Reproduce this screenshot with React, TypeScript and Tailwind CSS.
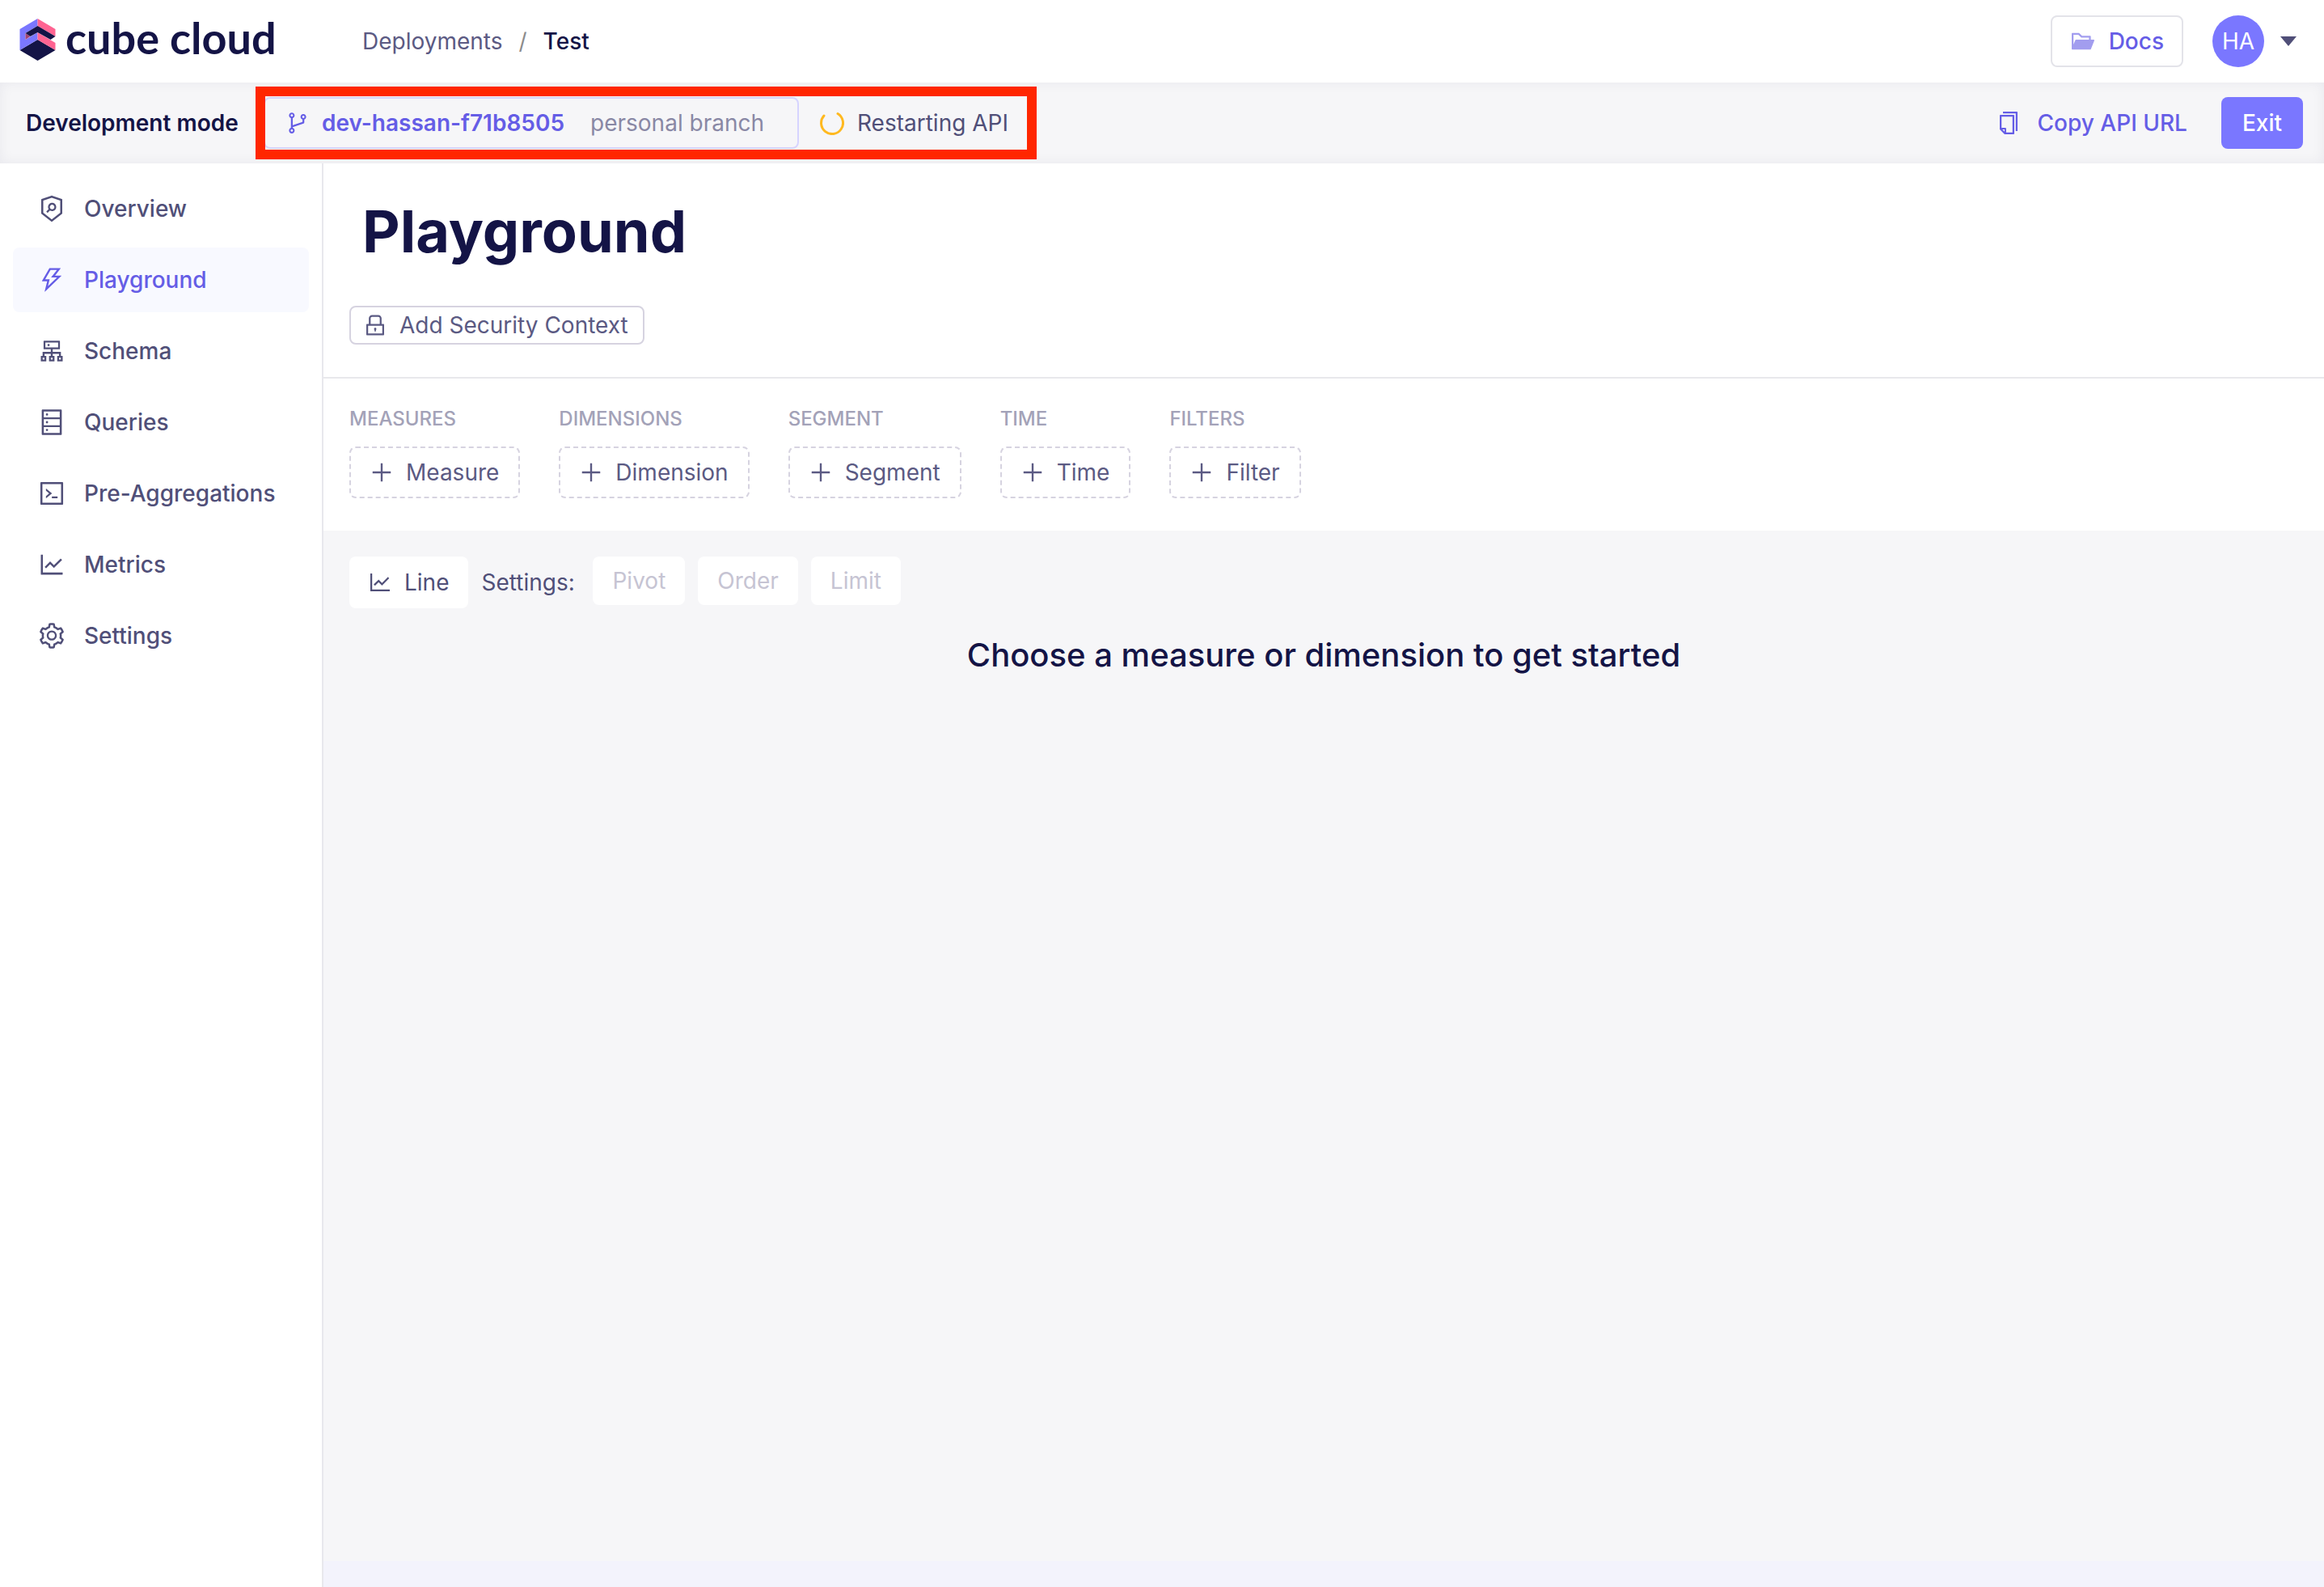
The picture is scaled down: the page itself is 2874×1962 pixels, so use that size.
import type { ComponentType, ReactNode } from "react";
import {
  AiFillFolderOpen,
  AiOutlineBranches,
  AiOutlineCluster,
  AiOutlineCode,
  AiOutlineCopy,
  AiOutlineDatabase,
  AiOutlineLineChart,
  AiOutlineLock,
  AiOutlinePlus,
  AiOutlineSecurityScan,
  AiOutlineSetting,
  AiOutlineThunderbolt,
} from "react-icons/ai";

type Icon = ComponentType<{ className?: string }>;

const navItems: { label: string; icon: Icon; active?: boolean }[] = [
  { label: "Overview", icon: AiOutlineSecurityScan },
  { label: "Playground", icon: AiOutlineThunderbolt, active: true },
  { label: "Schema", icon: AiOutlineCluster },
  { label: "Queries", icon: AiOutlineDatabase },
  { label: "Pre-Aggregations", icon: AiOutlineCode },
  { label: "Metrics", icon: AiOutlineLineChart },
  { label: "Settings", icon: AiOutlineSetting },
];

const members = [
  { heading: "Measures", action: "Measure" },
  { heading: "Dimensions", action: "Dimension" },
  { heading: "Segment", action: "Segment" },
  { heading: "Time", action: "Time" },
  { heading: "Filters", action: "Filter" },
];

function CubeMark() {
  return (
    <svg viewBox="0 0 44 52" className="h-[52px] w-[45px]" aria-hidden="true">
      <path d="M22 26 44 39 22 52 0 39Z" fill="#141446" />
      <path d="M0 13 22 0V9L7 18V26L22 17V26L0 39Z" fill="#7a77ff" />
      <path d="M7 18 13 22 7 26Z" fill="#a14474" />
      <path d="M22 0 44 13V22L22 9Z" fill="#ff6492" />
      <path d="M22 17 44 30V39L22 26Z" fill="#ff6492" />
      <path d="M22 9 44 22 38 26 22 17 13 22 7 18Z" fill="#141446" />
    </svg>
  );
}

function Header() {
  return (
    <header className="flex h-[102px] items-center justify-between px-6">
      <div className="flex items-center">
        <a href="#home" className="flex w-[424px] items-center gap-3 pb-1 text-[#141446]">
          <CubeMark />
          <span className="pb-1 font-[Lato] text-[54px] leading-none font-bold">cube cloud</span>
        </a>
        <nav aria-label="Breadcrumb" className="flex items-center gap-5">
          <a href="#deployments" className="text-[#5b5a83]">Deployments</a>
          <span className="text-[#8c8c8c]">/</span>
          <span className="font-medium text-[#141446]">Test</span>
        </nav>
      </div>
      <div className="flex items-center gap-9">
        <a
          href="#docs"
          className="flex h-16 items-center gap-4 rounded-lg border-2 border-[#e3e3e9] px-[22px] font-medium text-[#655de6]"
        >
          <AiFillFolderOpen className="size-8 opacity-60" />
          Docs
        </a>
        <button type="button" aria-label="Account" className="flex items-center gap-5 pr-2.5">
          <span className="flex size-16 items-center justify-center rounded-full bg-[#7a77ff] text-white">HA</span>
          <svg viewBox="0 0 20 12" className="h-3 w-5" aria-hidden="true">
            <path d="M0 0H20L10 12Z" fill="#504f78" />
          </svg>
        </button>
      </div>
    </header>
  );
}

function DevelopmentBar() {
  return (
    <div className="flex h-[100px] items-center justify-between bg-[#f6f6f8] pr-[26px] pl-8 shadow-[inset_0_0_16px_rgba(20,20,70,0.06)]">
      <div className="flex items-center">
        <span className="w-[294px] font-semibold text-[#141446]">Development mode</span>
        <div className="relative flex items-center">
          <button
            type="button"
            className="flex h-16 w-[662px] items-center gap-3.5 rounded-lg border-2 border-[#d6d4ff] pl-6"
          >
            <AiOutlineBranches className="size-8 text-[#655de6]" />
            <span className="flex items-center gap-8">
              <span className="font-semibold text-[#655de6]">dev-hassan-f71b8505</span>
              <span className="text-[#8988a5]">personal branch</span>
            </span>
          </button>
          <div className="flex w-[284px] items-center gap-4 pl-[26px] text-[#504f78]">
            <svg viewBox="0 0 30 30" className="size-[30px] shrink-0" aria-hidden="true">
              <path d="M22 3.500A13.500 13.500 0 1 1 5 6" fill="none" stroke="#ffb920" strokeWidth="3" strokeLinecap="round" />
            </svg>
            <span className="whitespace-nowrap">Restarting API</span>
          </div>
          <div className="pointer-events-none absolute -inset-x-[10px] -inset-y-[13px] border-12 border-[#ff2600]" />
        </div>
      </div>
      <div className="flex items-center gap-[42px]">
        <button type="button" className="flex items-center gap-5 font-medium text-[#655de6]">
          <AiOutlineCopy className="size-8" />
          Copy API URL
        </button>
        <button type="button" className="h-16 rounded-lg bg-[#7a77ff] px-[26px] font-medium text-white">
          Exit
        </button>
      </div>
    </div>
  );
}

function Sidebar() {
  return (
    <nav aria-label="Main" className="flex w-[400px] shrink-0 flex-col gap-2 border-r-2 border-[#e8e8ed] p-4">
      {navItems.map(({ label, icon: ItemIcon, active }) => (
        <a
          key={label}
          href={`#${label.toLowerCase()}`}
          aria-current={active ? "page" : undefined}
          className={
            active
              ? "flex h-20 items-center gap-[22px] rounded-lg bg-[#f8f9ff] pl-[30px] font-medium text-[#655de6]"
              : "flex h-20 items-center gap-[22px] rounded-lg pl-[30px] font-medium text-[#504f78]"
          }
        >
          <ItemIcon className="size-9" />
          {label}
        </a>
      ))}
    </nav>
  );
}

function SettingButton({ children }: { children: ReactNode }) {
  return (
    <button type="button" disabled className="h-[60px] rounded-lg bg-white px-6 text-[#c6c4d3]">
      {children}
    </button>
  );
}

function Playground() {
  return (
    <main className="flex grow flex-col bg-[#f3f3fc]">
      <section className="border-b-2 border-[#e8e8ec] bg-white px-8 pb-10">
        <h1 className="px-4 pt-10 pb-12 text-[72px] leading-[88px] font-bold text-[#141446]">Playground</h1>
        <button
          type="button"
          className="flex h-12 items-center gap-3.5 rounded-lg border-2 border-[#d6d3e0] pr-[18px] pl-3.5 text-[#5b5a83]"
        >
          <AiOutlineLock className="size-8" />
          Add Security Context
        </button>
      </section>
      <section className="flex gap-12 bg-white px-8 pt-8 pb-10">
        {members.map(({ heading, action }) => (
          <div key={heading} className="flex flex-col gap-4">
            <h2 className="text-2xl leading-9 font-medium text-[#a3a2b8] uppercase">{heading}</h2>
            <button
              type="button"
              className="flex h-16 items-center gap-3.5 rounded-lg border-2 border-dashed border-[#d6d3e0] pr-6 pl-[22px] text-[#5b5a83]"
            >
              <AiOutlinePlus className="size-8" />
              {action}
            </button>
          </div>
        ))}
      </section>
      <section className="mb-8 flex grow flex-col bg-[#f6f6f8] px-8 pt-8">
        <div className="flex items-start gap-4">
          <button type="button" className="flex h-16 items-center gap-3.5 rounded-lg bg-white pr-6 pl-[22px] text-[#504f78]">
            <AiOutlineLineChart className="size-8" />
            Line
          </button>
          <span className="w-[122px] leading-16 text-[#504f78]">Settings:</span>
          <SettingButton>Pivot</SettingButton>
          <SettingButton>Order</SettingButton>
          <SettingButton>Limit</SettingButton>
        </div>
        <p className="pt-[30px] text-center text-[40px] leading-[56px] font-medium text-[#141446]">
          Choose a measure or dimension to get started
        </p>
      </section>
    </main>
  );
}

export default function App() {
  return (
    <div className="flex min-h-screen flex-col bg-white font-[Inter,sans-serif] text-[28px] leading-10">
      <Header />
      <DevelopmentBar />
      <div className="flex grow">
        <Sidebar />
        <Playground />
      </div>
    </div>
  );
}
